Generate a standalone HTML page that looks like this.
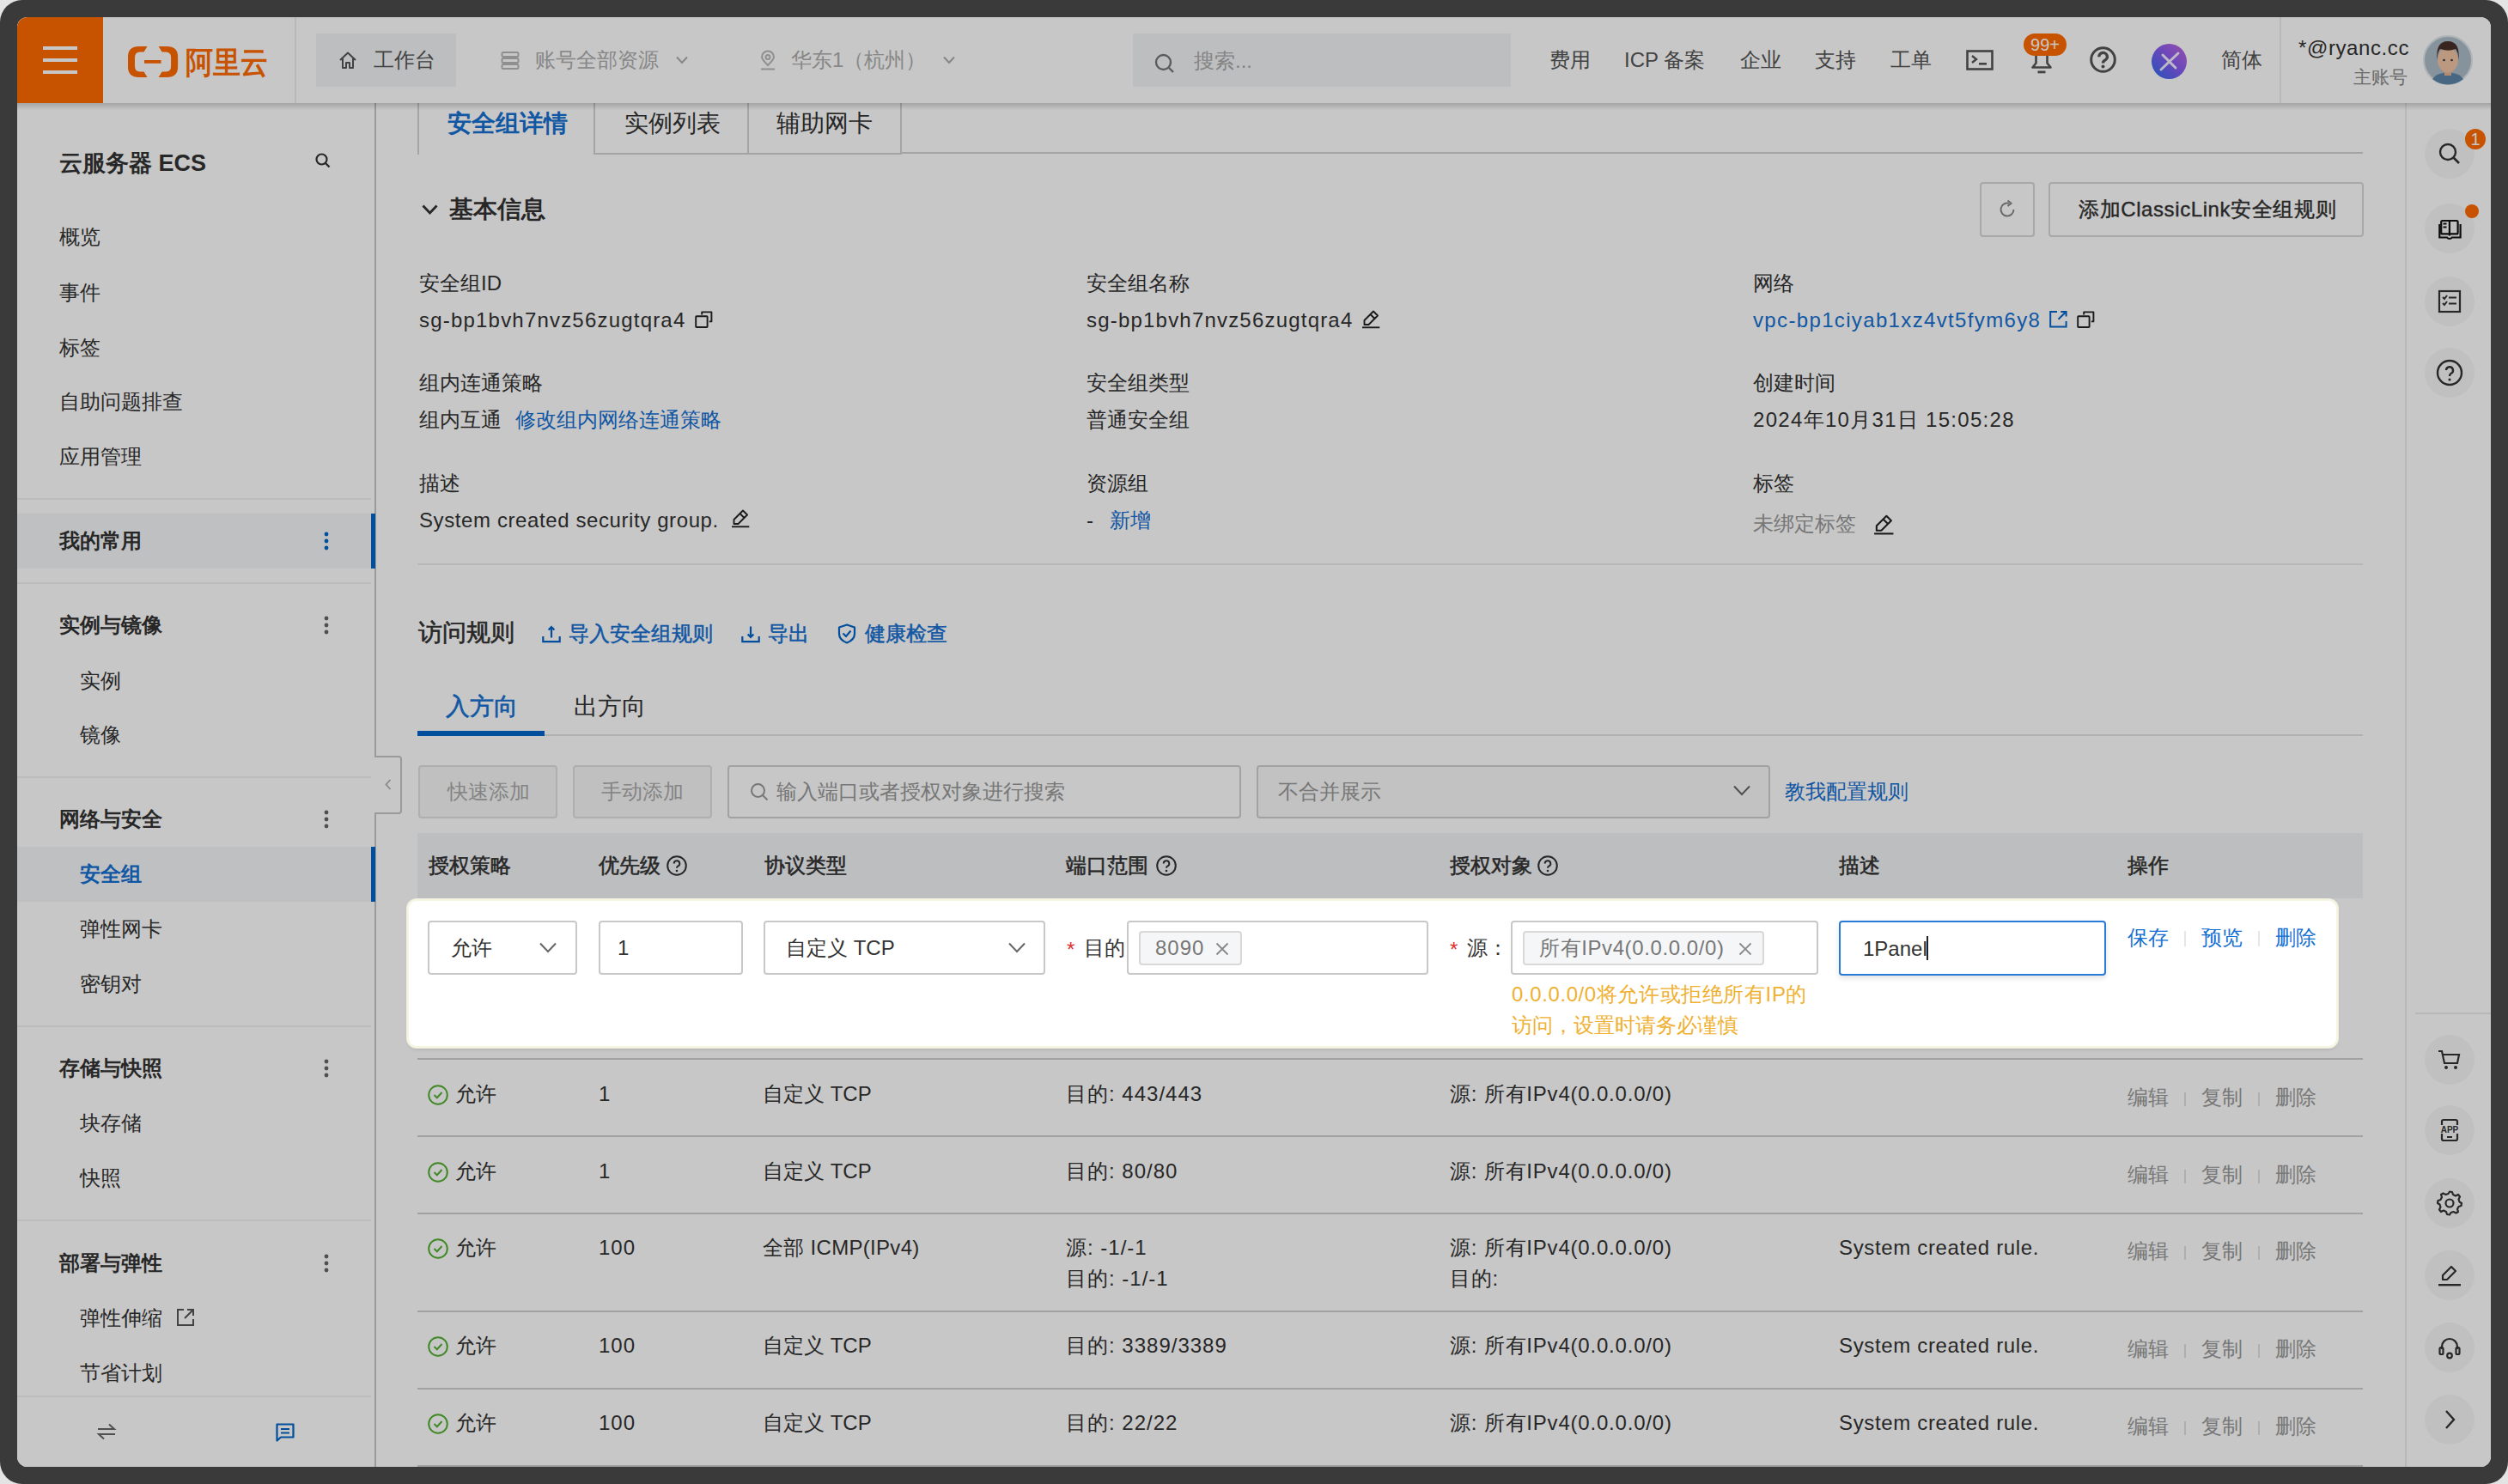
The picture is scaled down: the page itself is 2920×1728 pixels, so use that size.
<!DOCTYPE html>
<html><head><meta charset="utf-8">
<style>
*{box-sizing:border-box}
html,body{margin:0;padding:0}
body{width:2920px;height:1728px;position:relative;overflow:hidden;background:#e4e4e4;font-family:"Liberation Sans",sans-serif;color:#333}
.frame{position:absolute;left:0;top:0;width:2920px;height:1728px;background:#3a3a3a;border-radius:26px}
.page{position:absolute;left:0;top:0;width:2920px;height:1728px;background:#fff;clip-path:inset(20px round 12px)}
.a{position:absolute}
.t{position:absolute;white-space:nowrap;line-height:32px;font-size:24px}
.b{font-weight:bold}
.blue{color:#1570d2}
.gray{color:#999}
.ov{position:absolute;left:0;top:0;width:2920px;height:1728px;background:rgba(0,0,0,.22);z-index:50}
svg{position:absolute;overflow:visible}
.hdr{position:absolute;left:20px;top:20px;width:2880px;height:100px;background:#fff;z-index:10}
.hsh{position:absolute;left:20px;top:120px;width:2880px;height:8px;background:linear-gradient(rgba(0,0,0,.17),rgba(0,0,0,.07) 60%,rgba(0,0,0,0));z-index:10}
.side{position:absolute;left:20px;top:120px;width:418px;height:1588px;background:#fff;border-right:2px solid #c6c6c6}
.sep{position:absolute;height:2px;background:#f1f1f1}
.box{position:absolute;border:2px solid #d4d4d4;border-radius:4px;background:#fff}
.rline{position:absolute;left:486px;width:2265px;height:2px;background:#cfcfcf}
</style></head><body>
<div class="frame"></div>
<div class="page">

<!-- HEADER -->
<div class="hdr"></div><div class="hsh"></div>
<div class="a" style="left:20px;top:20px;width:100px;height:100px;background:#ff6a00;z-index:11"></div>
<div class="a" style="left:50px;top:54px;width:40px;height:4px;background:#fff;z-index:12"></div>
<div class="a" style="left:50px;top:68px;width:40px;height:4px;background:#fff;z-index:12"></div>
<div class="a" style="left:50px;top:82px;width:40px;height:4px;background:#fff;z-index:12"></div>
<div id="hdrc" style="position:absolute;left:0;top:0;z-index:12">
<!-- logo -->
<svg style="left:140px;top:45px" width="180" height="55" viewBox="140 45 180 55"><path d="M171.5 54 L162 54 Q149 54 149 66 L149 78 Q149 90 162 90 L171.5 90 L167.5 83.5 L163 83.5 Q157 83.5 157 77 L157 67 Q157 60.5 163 60.5 L167.5 60.5 Z" fill="#ff6a00"/><path d="M184.6 54 L194.1 54 Q207.1 54 207.1 66 L207.1 78 Q207.1 90 194.1 90 L184.6 90 L188.6 83.5 L193.1 83.5 Q199.1 83.5 199.1 77 L199.1 67 Q199.1 60.5 193.1 60.5 L188.6 60.5 Z" fill="#ff6a00"/><rect x="168" y="70" width="19.5" height="3.8" fill="#ff6a00"/><text x="216" y="85" font-family="Liberation Sans, sans-serif" font-size="36" font-weight="bold" fill="#ff6a00" textLength="96" lengthAdjust="spacingAndGlyphs">阿里云</text></svg>
<div class="a" style="left:343px;top:20px;width:2px;height:100px;background:#eee"></div>
<div class="a" style="left:368px;top:39px;width:163px;height:62px;background:#f3f4f6"></div>
<svg style="left:394px;top:59px" width="22" height="22" viewBox="0 0 22 22"><path d="M2 11 L11 2.5 L20 11 M5 9 V20 H9 V14 H13 V20 H17 V9" fill="none" stroke="#555" stroke-width="2" stroke-linejoin="round"/></svg>
<div class="t" style="left:435px;top:54px;color:#555">工作台</div>
<svg style="left:583px;top:59px" width="22" height="22" viewBox="0 0 22 22"><rect x="1.5" y="2" width="19" height="5" rx="1.5" fill="none" stroke="#b8b8b8" stroke-width="2"/><rect x="1.5" y="9" width="19" height="5" rx="1.5" fill="none" stroke="#b8b8b8" stroke-width="2"/><rect x="1.5" y="16" width="19" height="5" rx="1.5" fill="none" stroke="#b8b8b8" stroke-width="2"/></svg>
<div class="t" style="left:623px;top:54px;color:#adadad">账号全部资源</div>
<svg style="left:787px;top:65px" width="14" height="10" viewBox="0 0 14 10"><path d="M1 1.5 L7 8 L13 1.5" fill="none" stroke="#adadad" stroke-width="2"/></svg>
<svg style="left:885px;top:59px" width="18" height="23" viewBox="0 0 18 23"><path d="M9 17 C3 11 2 9 2 7.5 A7 7 0 0 1 16 7.5 C16 9 15 11 9 17Z" fill="none" stroke="#b8b8b8" stroke-width="2"/><circle cx="9" cy="7.5" r="2.5" fill="none" stroke="#b8b8b8" stroke-width="2"/><rect x="1" y="20.5" width="16" height="2" fill="#b8b8b8"/></svg>
<div class="t" style="left:921px;top:54px;color:#adadad">华东1（杭州）</div>
<svg style="left:1098px;top:65px" width="14" height="10" viewBox="0 0 14 10"><path d="M1 1.5 L7 8 L13 1.5" fill="none" stroke="#adadad" stroke-width="2"/></svg>
<div class="a" style="left:1319px;top:39px;width:440px;height:62px;background:#f3f4f6"></div>
<svg style="left:1344px;top:62px" width="24" height="24" viewBox="0 0 24 24"><circle cx="10.5" cy="10.5" r="8.5" fill="none" stroke="#777" stroke-width="2.4"/><path d="M17 17 L22 22" stroke="#777" stroke-width="2.4"/></svg>
<div class="t" style="left:1390px;top:55px;color:#aaa">搜索...</div>
<div class="t" style="left:1804px;top:54px;color:#555">费用</div>
<div class="t" style="left:1891px;top:54px;color:#555">ICP 备案</div>
<div class="t" style="left:2026px;top:54px;color:#555">企业</div>
<div class="t" style="left:2113px;top:54px;color:#555">支持</div>
<div class="t" style="left:2201px;top:54px;color:#555">工单</div>
<svg style="left:2289px;top:58px" width="32" height="24" viewBox="0 0 32 24"><rect x="1.5" y="1.5" width="29" height="21" fill="none" stroke="#555" stroke-width="2.6"/><path d="M7 7 L12 11 L7 15" fill="none" stroke="#555" stroke-width="2.4"/><rect x="15" y="15" width="9" height="2.6" fill="#555"/></svg>
<svg style="left:2364px;top:58px" width="26" height="28" viewBox="0 0 26 28"><path d="M6.5 3 V15.5 L2.5 20.5 H23.5 L19.5 15.5 V3" fill="none" stroke="#555" stroke-width="2.6" stroke-linejoin="round"/><rect x="8.5" y="24.5" width="9" height="2.8" fill="#555"/></svg>
<div class="a" style="left:2356px;top:39px;width:50px;height:26px;border-radius:13px;background:#ff6a00;color:#fff;font-size:20px;line-height:26px;text-align:center">99+</div>
<svg style="left:2433px;top:54px" width="31" height="31" viewBox="0 0 31 31"><circle cx="15.5" cy="15.5" r="13.8" fill="none" stroke="#555" stroke-width="3"/><path d="M10.8 12.2 A4.8 4.6 0 1 1 17.6 16.2 Q15.5 17.3 15.5 19.6" fill="none" stroke="#555" stroke-width="3.4"/><circle cx="15.5" cy="23.6" r="2" fill="#555"/></svg>
<svg style="left:2505px;top:51px" width="41" height="41" viewBox="0 0 41 41"><defs><linearGradient id="pg" x1="0" y1="1" x2="1" y2="0"><stop offset="0" stop-color="#2a6cf0"/><stop offset=".55" stop-color="#8a5cf0"/><stop offset="1" stop-color="#c266d8"/></linearGradient></defs><circle cx="20.5" cy="20.5" r="20.5" fill="url(#pg)"/><path d="M11 30 L31 11 M13 13 L28 28" stroke="#fff" stroke-width="3" stroke-linecap="round" opacity=".9"/></svg>
<div class="t" style="left:2586px;top:54px;color:#555">简体</div>
<div class="a" style="left:2654px;top:20px;width:2px;height:100px;background:#eee"></div>
<div class="t" style="left:2676px;top:40px;color:#333;font-size:24px;letter-spacing:.6px">*@ryanc.cc</div>
<div class="t" style="left:2740px;top:74px;color:#888;font-size:21px">主账号</div>
<svg style="left:2821px;top:41px" width="58" height="58" viewBox="0 0 58 58"><circle cx="29" cy="29" r="28" fill="#aebdc8" stroke="#dfe6ea" stroke-width="2"/><path d="M11 51 Q15 45 24 44 L34 44 Q43 45 47 51 Q39 57.5 29 57.5 Q19 57.5 11 51Z" fill="#5b85a8"/><rect x="25" y="38" width="8" height="9" fill="#e3b494"/><ellipse cx="29" cy="29" rx="12" ry="14.5" fill="#f0c4a4"/><path d="M16.5 29 Q14.5 7 29 7 Q43.5 7 41.5 29 Q41 19 38 16 Q30 19.5 20 16 Q17 19 16.5 29Z" fill="#4a3028"/><circle cx="24.5" cy="29" r="1.3" fill="#333"/><circle cx="33.5" cy="29" r="1.3" fill="#333"/></svg>
</div>

<!-- SIDEBAR -->
<div class="side"></div>
<div class="t b" style="left:69px;top:174px;font-size:27px;line-height:32px;color:#333">云服务器 ECS</div>
<svg style="left:367px;top:178px" width="18" height="18" viewBox="0 0 18 18"><circle cx="7.5" cy="7.5" r="6" fill="none" stroke="#333" stroke-width="2.2"/><path d="M12 12 L16.5 16.5" stroke="#333" stroke-width="2.4"/></svg>
<div class="t" style="left:69px;top:260px">概览</div>
<div class="t" style="left:69px;top:325px">事件</div>
<div class="t" style="left:69px;top:389px">标签</div>
<div class="t" style="left:69px;top:452px">自助问题排查</div>
<div class="t" style="left:69px;top:516px">应用管理</div>
<div class="sep" style="left:20px;top:580px;width:412px"></div>
<div class="a" style="left:20px;top:598px;width:417px;height:64px;background:#f4f6f9"></div>
<div class="a" style="left:432px;top:598px;width:5px;height:64px;background:#0064c8"></div>
<div class="t b" style="left:69px;top:614px">我的常用</div>
<svg style="left:376px;top:619px" width="8" height="22" viewBox="0 0 8 22"><circle cx="4" cy="3" r="2.4" fill="#0064c8"/><circle cx="4" cy="11" r="2.4" fill="#0064c8"/><circle cx="4" cy="19" r="2.4" fill="#0064c8"/></svg>
<div class="sep" style="left:20px;top:678px;width:412px"></div>
<div class="t b" style="left:69px;top:712px">实例与镜像</div>
<svg style="left:376px;top:717px" width="8" height="22" viewBox="0 0 8 22"><circle cx="4" cy="3" r="2.4" fill="#666"/><circle cx="4" cy="11" r="2.4" fill="#666"/><circle cx="4" cy="19" r="2.4" fill="#666"/></svg>
<div class="t" style="left:93px;top:777px">实例</div>
<div class="t" style="left:93px;top:840px">镜像</div>
<div class="sep" style="left:20px;top:904px;width:412px"></div>
<div class="t b" style="left:69px;top:938px">网络与安全</div>
<svg style="left:376px;top:943px" width="8" height="22" viewBox="0 0 8 22"><circle cx="4" cy="3" r="2.4" fill="#666"/><circle cx="4" cy="11" r="2.4" fill="#666"/><circle cx="4" cy="19" r="2.4" fill="#666"/></svg>
<div class="a" style="left:20px;top:986px;width:417px;height:64px;background:#f4f6f9"></div>
<div class="a" style="left:432px;top:986px;width:5px;height:64px;background:#0064c8"></div>
<div class="t blue" style="left:93px;top:1002px;font-weight:bold">安全组</div>
<div class="t" style="left:93px;top:1066px">弹性网卡</div>
<div class="t" style="left:93px;top:1130px">密钥对</div>
<div class="sep" style="left:20px;top:1194px;width:412px"></div>
<div class="t b" style="left:69px;top:1228px">存储与快照</div>
<svg style="left:376px;top:1233px" width="8" height="22" viewBox="0 0 8 22"><circle cx="4" cy="3" r="2.4" fill="#666"/><circle cx="4" cy="11" r="2.4" fill="#666"/><circle cx="4" cy="19" r="2.4" fill="#666"/></svg>
<div class="t" style="left:93px;top:1292px">块存储</div>
<div class="t" style="left:93px;top:1356px">快照</div>
<div class="sep" style="left:20px;top:1420px;width:412px"></div>
<div class="t b" style="left:69px;top:1455px">部署与弹性</div>
<svg style="left:376px;top:1460px" width="8" height="22" viewBox="0 0 8 22"><circle cx="4" cy="3" r="2.4" fill="#666"/><circle cx="4" cy="11" r="2.4" fill="#666"/><circle cx="4" cy="19" r="2.4" fill="#666"/></svg>
<div class="t" style="left:93px;top:1519px">弹性伸缩</div>
<svg style="left:205px;top:1523px" width="22" height="22" viewBox="0 0 22 22"><path d="M9 2 H2 V20 H20 V13 M13 2 H20 V9 M20 2 L10 12" fill="none" stroke="#555" stroke-width="2"/></svg>
<div class="t" style="left:93px;top:1583px">节省计划</div>
<div class="sep" style="left:20px;top:1625px;width:412px"></div>
<svg style="left:113px;top:1657px" width="22" height="20" viewBox="0 0 22 20"><path d="M1 7 H20 L14 1.5 M21 13 H2 L8 18.5" fill="none" stroke="#666" stroke-width="2"/></svg>
<svg style="left:321px;top:1657px" width="22" height="22" viewBox="0 0 22 22"><path d="M1.5 1.5 H20.5 V16.5 H6 L1.5 20.5Z M6 7 H16 M6 11.5 H16" fill="none" stroke="#0064c8" stroke-width="2.2" stroke-linejoin="round"/></svg>
<!-- collapse tab -->
<div class="a" style="left:436px;top:880px;width:32px;height:68px;background:#fff;border:2px solid #c6c6c6;border-left:none;border-radius:0 4px 4px 0"></div>
<div class="a" style="left:436px;top:882px;width:2px;height:64px;background:#fff"></div>
<svg style="left:448px;top:907px" width="8" height="13" viewBox="0 0 8 13"><path d="M6.5 1 L1.5 6.5 L6.5 12" fill="none" stroke="#b0b0b0" stroke-width="1.8"/></svg>

<!-- MAIN: tabs -->
<div class="a" style="left:486px;top:100px;width:207px;height:80px;border:2px solid #d2d2d2;border-bottom:none;background:#fff"></div>
<div class="a" style="left:691px;top:100px;width:181px;height:80px;border:2px solid #d2d2d2;background:#fff"></div>
<div class="a" style="left:870px;top:100px;width:180px;height:80px;border:2px solid #d2d2d2;background:#fff"></div>
<div class="a" style="left:1048px;top:177px;width:1703px;height:2px;background:#d2d2d2"></div>
<div class="t b blue" style="left:521px;top:127px;font-size:28px;line-height:34px">安全组详情</div>
<div class="t" style="left:727px;top:127px;font-size:28px;line-height:34px">实例列表</div>
<div class="t" style="left:904px;top:127px;font-size:28px;line-height:34px">辅助网卡</div>

<!-- basic info -->
<svg style="left:491px;top:238px" width="19" height="12" viewBox="0 0 19 12"><path d="M1.5 1.5 L9.5 10 L17.5 1.5" fill="none" stroke="#333" stroke-width="2.8"/></svg>
<div class="t b" style="left:523px;top:227px;font-size:28px;line-height:34px">基本信息</div>
<div class="box" style="left:2305px;top:212px;width:64px;height:64px;border-color:#d8d8d8"></div>
<svg style="left:2326px;top:233px" width="22" height="22" viewBox="0 0 22 22"><path d="M18.5 11 A7.5 7.5 0 1 1 13 3.8" fill="none" stroke="#888" stroke-width="2"/><path d="M11.5 0.5 L15.5 3.8 L11.5 7" fill="none" stroke="#888" stroke-width="2"/></svg>
<div class="box" style="left:2385px;top:212px;width:367px;height:64px;border-color:#d8d8d8"></div>
<div class="t" style="left:2420px;top:228px;font-size:24px;line-height:32px;color:#333;letter-spacing:.6px;-webkit-text-stroke:.4px #333">添加ClassicLink安全组规则</div>

<div class="t" style="left:488px;top:314px">安全组ID</div>
<div class="t" style="left:488px;top:357px;letter-spacing:1.2px">sg-bp1bvh7nvz56zugtqra4</div>
<svg style="left:805px;top:358px" width="30" height="30" viewBox="0 0 30 30"><rect x="5.2" y="10.2" width="13.4" height="12.8" rx=".8" fill="none" stroke="#222" stroke-width="1.9"/><path d="M12.2 8.4 V5.4 H23.4 V16.4 H20.8" fill="none" stroke="#222" stroke-width="1.9" stroke-linejoin="round"/></svg>
<div class="t" style="left:488px;top:430px">组内连通策略</div>
<div class="t" style="left:488px;top:473px">组内互通</div>
<div class="t blue" style="left:600px;top:473px">修改组内网络连通策略</div>
<div class="t" style="left:488px;top:547px">描述</div>
<div class="t" style="left:488px;top:590px;letter-spacing:.6px">System created security group.</div>
<svg style="left:851px;top:592px" width="24.0" height="24.0" viewBox="0 0 24 24"><path d="M14 2.5 L19 7.5 L8.5 18 L3.5 18 L3.5 13 Z M10.5 6 L15.5 11" fill="none" stroke="#222" stroke-width="1.9" stroke-linejoin="round"/><path d="M1 21.3 H21.3" stroke="#222" stroke-width="1.9"/></svg>

<div class="t" style="left:1265px;top:314px">安全组名称</div>
<div class="t" style="left:1265px;top:357px;letter-spacing:1.2px">sg-bp1bvh7nvz56zugtqra4</div>
<svg style="left:1585px;top:360px" width="24.0" height="24.0" viewBox="0 0 24 24"><path d="M14 2.5 L19 7.5 L8.5 18 L3.5 18 L3.5 13 Z M10.5 6 L15.5 11" fill="none" stroke="#222" stroke-width="1.9" stroke-linejoin="round"/><path d="M1 21.3 H21.3" stroke="#222" stroke-width="1.9"/></svg>
<div class="t" style="left:1265px;top:430px">安全组类型</div>
<div class="t" style="left:1265px;top:473px">普通安全组</div>
<div class="t" style="left:1265px;top:547px">资源组</div>
<div class="t" style="left:1265px;top:590px">-</div>
<div class="t blue" style="left:1292px;top:590px">新增</div>

<div class="t" style="left:2041px;top:314px">网络</div>
<div class="t blue" style="left:2041px;top:357px;letter-spacing:1.35px">vpc-bp1ciyab1xz4vt5fym6y8</div>
<svg style="left:2384px;top:360px" width="24" height="24" viewBox="0 0 24 24"><path d="M11 3 H3.2 V20.5 H21.6 V14 M12.5 11.8 L21 3.5 M15.3 3 H21.6 V8.6" fill="none" stroke="#0064c8" stroke-width="2"/></svg>
<svg style="left:2414px;top:358px" width="30" height="30" viewBox="0 0 30 30"><rect x="5.2" y="10.2" width="13.4" height="12.8" rx=".8" fill="none" stroke="#222" stroke-width="1.9"/><path d="M12.2 8.4 V5.4 H23.4 V16.4 H20.8" fill="none" stroke="#222" stroke-width="1.9" stroke-linejoin="round"/></svg>
<div class="t" style="left:2041px;top:430px">创建时间</div>
<div class="t" style="left:2041px;top:473px;letter-spacing:1.3px">2024年10月31日 15:05:28</div>
<div class="t" style="left:2041px;top:547px">标签</div>
<div class="t gray" style="left:2041px;top:594px">未绑定标签</div>
<svg style="left:2181px;top:598px" width="26.400000000000002" height="26.400000000000002" viewBox="0 0 24 24"><path d="M14 2.5 L19 7.5 L8.5 18 L3.5 18 L3.5 13 Z M10.5 6 L15.5 11" fill="none" stroke="#222" stroke-width="1.9" stroke-linejoin="round"/><path d="M1 21.3 H21.3" stroke="#222" stroke-width="1.9"/></svg>
<div class="a" style="left:486px;top:656px;width:2265px;height:2px;background:#ececec"></div>

<!-- access rules -->
<div class="t" style="left:487px;top:720px;font-size:28px;line-height:34px;-webkit-text-stroke:.6px #333">访问规则</div>
<svg style="left:631px;top:727px" width="22" height="22" viewBox="0 0 22 22"><path d="M1.3 14 V20.2 H20.7 V14 M11 15.5 V3.2 M7.6 6.6 L11 3 L14.4 6.6" fill="none" stroke="#0064c8" stroke-width="2.2"/></svg>
<div class="t blue" style="left:662px;top:722px;-webkit-text-stroke:.5px #1570d2">导入安全组规则</div>
<svg style="left:863px;top:727px" width="22" height="22" viewBox="0 0 22 22"><path d="M1.3 14 V20.2 H20.7 V14 M11 2.5 V14.8 M7.6 11.4 L11 15 L14.4 11.4" fill="none" stroke="#0064c8" stroke-width="2.2"/></svg>
<div class="t blue" style="left:894px;top:722px;-webkit-text-stroke:.5px #1570d2">导出</div>
<svg style="left:975px;top:726px" width="22" height="24" viewBox="0 0 22 24"><path d="M11 1.5 L20 4.5 V12 Q20 19 11 22.5 Q2 19 2 12 V4.5Z" fill="none" stroke="#0064c8" stroke-width="2.2" stroke-linejoin="round"/><path d="M6.5 11.5 L10 15 L15.5 8.5" fill="none" stroke="#0064c8" stroke-width="2.2"/></svg>
<div class="t blue" style="left:1007px;top:722px;-webkit-text-stroke:.5px #1570d2">健康检查</div>

<div class="t blue" style="left:519px;top:806px;font-size:28px;line-height:34px;-webkit-text-stroke:.6px #1570d2">入方向</div>
<div class="t" style="left:668px;top:806px;font-size:28px;line-height:34px">出方向</div>
<div class="a" style="left:486px;top:855px;width:2265px;height:2px;background:#e3e3e3"></div>
<div class="a" style="left:486px;top:851px;width:148px;height:6px;background:#0064c8"></div>

<div class="box" style="left:487px;top:891px;width:162px;height:62px;background:#f7f7f7;border-color:#e0e0e0"></div>
<div class="t" style="left:521px;top:906px;color:#aaa">快速添加</div>
<div class="box" style="left:667px;top:891px;width:162px;height:62px;background:#f7f7f7;border-color:#e0e0e0"></div>
<div class="t" style="left:700px;top:906px;color:#aaa">手动添加</div>
<div class="box" style="left:847px;top:891px;width:598px;height:62px;border-color:#d0d0d0"></div>
<svg style="left:873px;top:911px" width="22" height="22" viewBox="0 0 22 22"><circle cx="9.5" cy="9.5" r="7.5" fill="none" stroke="#999" stroke-width="2"/><path d="M15 15 L20.5 20.5" stroke="#999" stroke-width="2"/></svg>
<div class="t" style="left:904px;top:906px;color:#999">输入端口或者授权对象进行搜索</div>
<div class="box" style="left:1463px;top:891px;width:598px;height:62px;border-color:#d0d0d0;background:#f9f9f9"></div>
<div class="t" style="left:1488px;top:906px;color:#999">不合并展示</div>
<svg style="left:2018px;top:914px" width="20" height="13" viewBox="0 0 20 13"><path d="M1 1.5 L10 11 L19 1.5" fill="none" stroke="#666" stroke-width="2"/></svg>
<div class="t blue" style="left:2078px;top:906px">教我配置规则</div>

<!-- table header -->
<div class="a" style="left:486px;top:970px;width:2265px;height:76px;background:#f2f4f7"></div>
<div class="t" style="left:499px;top:992px;-webkit-text-stroke:.55px #333">授权策略</div>
<div class="t" style="left:697px;top:992px;-webkit-text-stroke:.55px #333">优先级</div>
<div class="t" style="left:890px;top:992px;-webkit-text-stroke:.55px #333">协议类型</div>
<div class="t" style="left:1241px;top:992px;-webkit-text-stroke:.55px #333">端口范围</div>
<div class="t" style="left:1688px;top:992px;-webkit-text-stroke:.55px #333">授权对象</div>
<div class="t" style="left:2141px;top:992px;-webkit-text-stroke:.55px #333">描述</div>
<div class="t" style="left:2477px;top:992px;-webkit-text-stroke:.55px #333">操作</div>

<!-- header ? icons -->
<svg style="left:776px;top:996px" width="24" height="24" viewBox="0 0 24 24"><circle cx="12" cy="12" r="10.8" fill="none" stroke="#333" stroke-width="2"/><path d="M8.7 9.5 A3.3 3.3 0 1 1 13.2 12.6 Q12 13.3 12 14.8" fill="none" stroke="#333" stroke-width="2"/><circle cx="12" cy="18" r="1.3" fill="#333"/></svg>
<svg style="left:1346px;top:996px" width="24" height="24" viewBox="0 0 24 24"><circle cx="12" cy="12" r="10.8" fill="none" stroke="#333" stroke-width="2"/><path d="M8.7 9.5 A3.3 3.3 0 1 1 13.2 12.6 Q12 13.3 12 14.8" fill="none" stroke="#333" stroke-width="2"/><circle cx="12" cy="18" r="1.3" fill="#333"/></svg>
<svg style="left:1790px;top:996px" width="24" height="24" viewBox="0 0 24 24"><circle cx="12" cy="12" r="10.8" fill="none" stroke="#333" stroke-width="2"/><path d="M8.7 9.5 A3.3 3.3 0 1 1 13.2 12.6 Q12 13.3 12 14.8" fill="none" stroke="#333" stroke-width="2"/><circle cx="12" cy="18" r="1.3" fill="#333"/></svg>

<!-- rows -->
<div class="rline" style="top:1232px"></div>
<div class="rline" style="top:1322px"></div>
<div class="rline" style="top:1412px"></div>
<div class="rline" style="top:1526px"></div>
<div class="rline" style="top:1616px"></div>
<div class="rline" style="top:1706px"></div>
<svg style="left:498px;top:1263px" width="24" height="24" viewBox="0 0 24 24"><circle cx="12" cy="12" r="10.8" fill="none" stroke="#52b030" stroke-width="2"/><path d="M7.5 12 L10.8 15.2 L16.5 9" fill="none" stroke="#52b030" stroke-width="2"/></svg>
<div class="t" style="left:530px;top:1258px">允许</div>
<div class="t" style="left:697px;top:1258px;letter-spacing:1px">1</div>
<div class="t" style="left:888px;top:1258px">自定义 TCP</div>
<div class="t" style="left:1241px;top:1258px;letter-spacing:1px">目的: 443/443</div>
<div class="t" style="left:1688px;top:1258px;letter-spacing:.8px">源: 所有IPv4(0.0.0.0/0)</div>
<div class="t" style="left:2477px;top:1262px;color:#999">编辑</div>
<div class="a" style="left:2543px;top:1272px;width:2px;height:16px;background:#e0e0e0"></div>
<div class="t" style="left:2563px;top:1262px;color:#999">复制</div>
<div class="a" style="left:2629px;top:1272px;width:2px;height:16px;background:#e0e0e0"></div>
<div class="t" style="left:2649px;top:1262px;color:#999">删除</div>
<svg style="left:498px;top:1353px" width="24" height="24" viewBox="0 0 24 24"><circle cx="12" cy="12" r="10.8" fill="none" stroke="#52b030" stroke-width="2"/><path d="M7.5 12 L10.8 15.2 L16.5 9" fill="none" stroke="#52b030" stroke-width="2"/></svg>
<div class="t" style="left:530px;top:1348px">允许</div>
<div class="t" style="left:697px;top:1348px;letter-spacing:1px">1</div>
<div class="t" style="left:888px;top:1348px">自定义 TCP</div>
<div class="t" style="left:1241px;top:1348px;letter-spacing:1px">目的: 80/80</div>
<div class="t" style="left:1688px;top:1348px;letter-spacing:.8px">源: 所有IPv4(0.0.0.0/0)</div>
<div class="t" style="left:2477px;top:1352px;color:#999">编辑</div>
<div class="a" style="left:2543px;top:1362px;width:2px;height:16px;background:#e0e0e0"></div>
<div class="t" style="left:2563px;top:1352px;color:#999">复制</div>
<div class="a" style="left:2629px;top:1362px;width:2px;height:16px;background:#e0e0e0"></div>
<div class="t" style="left:2649px;top:1352px;color:#999">删除</div>
<svg style="left:498px;top:1442px" width="24" height="24" viewBox="0 0 24 24"><circle cx="12" cy="12" r="10.8" fill="none" stroke="#52b030" stroke-width="2"/><path d="M7.5 12 L10.8 15.2 L16.5 9" fill="none" stroke="#52b030" stroke-width="2"/></svg>
<div class="t" style="left:530px;top:1437px">允许</div>
<div class="t" style="left:697px;top:1437px;letter-spacing:1px">100</div>
<div class="t" style="left:888px;top:1437px;letter-spacing:.3px">全部 ICMP(IPv4)</div>
<div class="t" style="left:1241px;top:1437px;letter-spacing:1px">源: -1/-1</div>
<div class="t" style="left:1688px;top:1437px;letter-spacing:.8px">源: 所有IPv4(0.0.0.0/0)</div>
<div class="t" style="left:1241px;top:1473px;letter-spacing:1px">目的: -1/-1</div>
<div class="t" style="left:1688px;top:1473px;letter-spacing:.8px">目的:</div>
<div class="t" style="left:2141px;top:1437px;letter-spacing:.65px">System created rule.</div>
<div class="t" style="left:2477px;top:1441px;color:#999">编辑</div>
<div class="a" style="left:2543px;top:1451px;width:2px;height:16px;background:#e0e0e0"></div>
<div class="t" style="left:2563px;top:1441px;color:#999">复制</div>
<div class="a" style="left:2629px;top:1451px;width:2px;height:16px;background:#e0e0e0"></div>
<div class="t" style="left:2649px;top:1441px;color:#999">删除</div>
<svg style="left:498px;top:1556px" width="24" height="24" viewBox="0 0 24 24"><circle cx="12" cy="12" r="10.8" fill="none" stroke="#52b030" stroke-width="2"/><path d="M7.5 12 L10.8 15.2 L16.5 9" fill="none" stroke="#52b030" stroke-width="2"/></svg>
<div class="t" style="left:530px;top:1551px">允许</div>
<div class="t" style="left:697px;top:1551px;letter-spacing:1px">100</div>
<div class="t" style="left:888px;top:1551px">自定义 TCP</div>
<div class="t" style="left:1241px;top:1551px;letter-spacing:1px">目的: 3389/3389</div>
<div class="t" style="left:1688px;top:1551px;letter-spacing:.8px">源: 所有IPv4(0.0.0.0/0)</div>
<div class="t" style="left:2141px;top:1551px;letter-spacing:.65px">System created rule.</div>
<div class="t" style="left:2477px;top:1555px;color:#999">编辑</div>
<div class="a" style="left:2543px;top:1565px;width:2px;height:16px;background:#e0e0e0"></div>
<div class="t" style="left:2563px;top:1555px;color:#999">复制</div>
<div class="a" style="left:2629px;top:1565px;width:2px;height:16px;background:#e0e0e0"></div>
<div class="t" style="left:2649px;top:1555px;color:#999">删除</div>
<svg style="left:498px;top:1646px" width="24" height="24" viewBox="0 0 24 24"><circle cx="12" cy="12" r="10.8" fill="none" stroke="#52b030" stroke-width="2"/><path d="M7.5 12 L10.8 15.2 L16.5 9" fill="none" stroke="#52b030" stroke-width="2"/></svg>
<div class="t" style="left:530px;top:1641px">允许</div>
<div class="t" style="left:697px;top:1641px;letter-spacing:1px">100</div>
<div class="t" style="left:888px;top:1641px">自定义 TCP</div>
<div class="t" style="left:1241px;top:1641px;letter-spacing:1px">目的: 22/22</div>
<div class="t" style="left:1688px;top:1641px;letter-spacing:.8px">源: 所有IPv4(0.0.0.0/0)</div>
<div class="t" style="left:2141px;top:1641px;letter-spacing:.65px">System created rule.</div>
<div class="t" style="left:2477px;top:1645px;color:#999">编辑</div>
<div class="a" style="left:2543px;top:1655px;width:2px;height:16px;background:#e0e0e0"></div>
<div class="t" style="left:2563px;top:1645px;color:#999">复制</div>
<div class="a" style="left:2629px;top:1655px;width:2px;height:16px;background:#e0e0e0"></div>
<div class="t" style="left:2649px;top:1645px;color:#999">删除</div>
<div class="a" style="left:2800px;top:120px;width:100px;height:1588px;background:#fff;border-left:2px solid #ececec"></div>
<div class="a" style="left:2812px;top:1179px;width:88px;height:2px;background:#ececec"></div>
<div class="a" style="left:2823px;top:150px;width:58px;height:58px;border-radius:50%;background:#f7f7f8"></div>
<svg style="left:2839px;top:166px" width="26" height="26" viewBox="0 0 26 26"><circle cx="11" cy="11" r="9" fill="none" stroke="#333" stroke-width="2.4"/><path d="M17.5 17.5 L24 24" stroke="#333" stroke-width="2.6"/></svg>
<div class="a" style="left:2823px;top:237px;width:58px;height:58px;border-radius:50%;background:#f7f7f8"></div>
<svg style="left:2839px;top:253px" width="26" height="26" viewBox="0 0 26 26"><rect x="3.2" y="4" width="19.4" height="15.4" rx="1.5" fill="none" stroke="#111" stroke-width="2.2"/><path d="M12.9 4 V21.5 M1.3 8 V23.5 H10 Q11 25 12.9 25 Q14.8 25 15.8 23.5 H25.6 V8 M5.5 7.5 H9.5 M5.5 11.5 H9.5" fill="none" stroke="#111" stroke-width="2.2"/></svg>
<div class="a" style="left:2823px;top:322px;width:58px;height:58px;border-radius:50%;background:#f7f7f8"></div>
<svg style="left:2839px;top:338px" width="26" height="26" viewBox="0 0 26 26"><rect x="1" y="1" width="24" height="24" fill="none" stroke="#333" stroke-width="2.2"/><path d="M5 8 L7 10 L10 6 M5 15 L7 17 L10 13 M12 8.5 H21 M12 15.5 H21" fill="none" stroke="#333" stroke-width="2"/></svg>
<div class="a" style="left:2823px;top:405px;width:58px;height:58px;border-radius:50%;background:#f7f7f8"></div>
<svg style="left:2839px;top:421px" width="26" height="26" viewBox="0 0 26 26"><circle cx="13" cy="13" r="14" fill="none" stroke="#333" stroke-width="2.4"/><path d="M9 10 A4 4 0 1 1 14.5 14 Q13 15 13 17" fill="none" stroke="#333" stroke-width="2.4"/><circle cx="13" cy="21" r="1.6" fill="#333"/></svg>
<div class="a" style="left:2823px;top:1205px;width:58px;height:58px;border-radius:50%;background:#f7f7f8"></div>
<svg style="left:2839px;top:1221px" width="26" height="26" viewBox="0 0 26 26"><path d="M0 3 H4 L7 17 H22 L24 7 H5.5" fill="none" stroke="#333" stroke-width="2.2"/><circle cx="9" cy="22" r="2" fill="#333"/><circle cx="20" cy="22" r="2" fill="#333"/></svg>
<div class="a" style="left:2823px;top:1287px;width:58px;height:58px;border-radius:50%;background:#f7f7f8"></div>
<svg style="left:2839px;top:1303px" width="26" height="26" viewBox="0 0 26 26"><path d="M4 7 V3 Q4 1 6 1 H20 Q22 1 22 3 V7 M4 17 V23 Q4 25 6 25 H20 Q22 25 22 23 V17 M10 21 H16" fill="none" stroke="#333" stroke-width="2.2"/><text x="13" y="16" font-size="10" font-family="Liberation Sans" font-weight="bold" text-anchor="middle" fill="#333">APP</text></svg>
<div class="a" style="left:2823px;top:1372px;width:58px;height:58px;border-radius:50%;background:#f7f7f8"></div>
<svg style="left:2839px;top:1388px" width="26" height="26" viewBox="0 0 26 26"><path d="M13 1.5 L16 2 L17 5 L20 6.5 L23 5 L25 7.5 L23.5 10.5 L24.5 13.5 L27 15 L26.5 18 L23.5 19 L22 22 L23 25 L20.5 26.5 L17.5 25 L14.5 26 L13 28.5 L10 28 L9 25 L6 23.5 L3 25 L1 22.5 L2.5 19.5 L1.5 16.5 L-1 15 L-.5 12 L2.5 11 L4 8 L3 5 L5.5 3.5 L8.5 5 L11.5 4Z" fill="none" stroke="#333" stroke-width="2.2" stroke-linejoin="round" transform="translate(0,-2)"/><circle cx="13" cy="13" r="4.5" fill="none" stroke="#333" stroke-width="2.2"/></svg>
<div class="a" style="left:2823px;top:1456px;width:58px;height:58px;border-radius:50%;background:#f7f7f8"></div>
<svg style="left:2839px;top:1472px" width="26" height="26" viewBox="0 0 26 26"><path d="M15 3 L20 8 L10 18 L5 18 L5 13 Z" fill="none" stroke="#333" stroke-width="2.2" stroke-linejoin="round"/><rect x="0" y="23" width="26" height="2.4" fill="#333"/></svg>
<div class="a" style="left:2823px;top:1540px;width:58px;height:58px;border-radius:50%;background:#f7f7f8"></div>
<svg style="left:2839px;top:1556px" width="26" height="26" viewBox="0 0 26 26"><path d="M4 15 V12 A9 9 0 0 1 22 12 V15" fill="none" stroke="#333" stroke-width="2.2"/><rect x="1.5" y="13" width="4" height="8" rx="1.5" fill="none" stroke="#333" stroke-width="2.2"/><rect x="20.5" y="13" width="4" height="8" rx="1.5" fill="none" stroke="#333" stroke-width="2.2"/><circle cx="13" cy="22.5" r="2.8" fill="none" stroke="#333" stroke-width="2.2"/></svg>
<div class="a" style="left:2823px;top:1624px;width:58px;height:58px;border-radius:50%;background:#f7f7f8"></div>
<svg style="left:2839px;top:1640px" width="26" height="26" viewBox="0 0 26 26"><path d="M9 3 L18 13 L9 23" fill="none" stroke="#333" stroke-width="2.4"/></svg>
<div class="a" style="left:2870px;top:150px;width:24px;height:24px;border-radius:50%;background:#ff6a00;color:#fff;font-size:20px;line-height:24px;text-align:center">1</div>
<div class="a" style="left:2870px;top:238px;width:16px;height:16px;border-radius:50%;background:#ff6a00"></div>
<div class="ov"></div>
<!-- HIGHLIGHT ROW -->
<div class="a" style="left:476px;top:1049px;width:2244px;height:169px;background:#fff;border-radius:9px;box-shadow:0 0 0 2px #f6f5e2,0 0 0 3px #eeede0,0 3px 5px rgba(0,0,0,.18);z-index:60">
</div>
<div id="hlc" style="position:absolute;left:0;top:0;z-index:61">
<div class="box" style="left:498px;top:1072px;width:174px;height:63px;border-color:#c8c8c8"></div>
<div class="t" style="left:525px;top:1088px">允许</div>
<svg style="left:628px;top:1097px" width="20" height="13" viewBox="0 0 20 13"><path d="M1 1.5 L10 11 L19 1.5" fill="none" stroke="#666" stroke-width="2"/></svg>
<div class="box" style="left:697px;top:1072px;width:168px;height:63px;border-color:#c8c8c8"></div>
<div class="t" style="left:719px;top:1088px">1</div>
<div class="box" style="left:889px;top:1072px;width:328px;height:63px;border-color:#c8c8c8"></div>
<div class="t" style="left:915px;top:1088px">自定义 TCP</div>
<svg style="left:1174px;top:1097px" width="20" height="13" viewBox="0 0 20 13"><path d="M1 1.5 L10 11 L19 1.5" fill="none" stroke="#666" stroke-width="2"/></svg>
<div class="t" style="left:1242px;top:1090px;color:#e03030">*</div>
<div class="t" style="left:1262px;top:1088px">目的</div>
<div class="box" style="left:1312px;top:1072px;width:351px;height:63px;border-color:#c8c8c8"></div>
<div class="box" style="left:1326px;top:1084px;width:120px;height:40px;background:#f5f6f8;border-color:#d8d8d8"></div>
<div class="t" style="left:1345px;top:1088px;color:#777;letter-spacing:1px">8090</div>
<svg style="left:1415px;top:1097px" width="16" height="16" viewBox="0 0 16 16"><path d="M1.5 1.5 L14.5 14.5 M14.5 1.5 L1.5 14.5" stroke="#888" stroke-width="1.8"/></svg>
<div class="t" style="left:1688px;top:1090px;color:#e03030">*</div>
<div class="t" style="left:1708px;top:1088px">源：</div>
<div class="box" style="left:1759px;top:1072px;width:358px;height:63px;border-color:#c8c8c8"></div>
<div class="box" style="left:1773px;top:1084px;width:281px;height:40px;background:#f5f6f8;border-color:#d8d8d8"></div>
<div class="t" style="left:1792px;top:1088px;color:#777;letter-spacing:.6px">所有IPv4(0.0.0.0/0)</div>
<svg style="left:2024px;top:1097px" width="16" height="16" viewBox="0 0 16 16"><path d="M1.5 1.5 L14.5 14.5 M14.5 1.5 L1.5 14.5" stroke="#888" stroke-width="1.8"/></svg>
<div class="t" style="left:1760px;top:1142px;color:#f0b030;letter-spacing:.6px">0.0.0.0/0将允许或拒绝所有IP的</div>
<div class="t" style="left:1760px;top:1178px;color:#f0b030">访问，设置时请务必谨慎</div>
<div class="box" style="left:2141px;top:1072px;width:311px;height:64px;border-color:#2a7ad8;box-shadow:0 3px 6px rgba(0,0,0,.12)"></div>
<div class="t" style="left:2169px;top:1089px">1Panel</div>
<div class="a" style="left:2243px;top:1090px;width:2px;height:28px;background:#222"></div>
<div class="t blue" style="left:2477px;top:1076px">保存</div>
<div class="a" style="left:2543px;top:1084px;width:2px;height:18px;background:#e6e6e6"></div>
<div class="t blue" style="left:2563px;top:1076px">预览</div>
<div class="a" style="left:2629px;top:1084px;width:2px;height:18px;background:#e6e6e6"></div>
<div class="t blue" style="left:2649px;top:1076px">删除</div>
</div>

</div>
</body></html>
